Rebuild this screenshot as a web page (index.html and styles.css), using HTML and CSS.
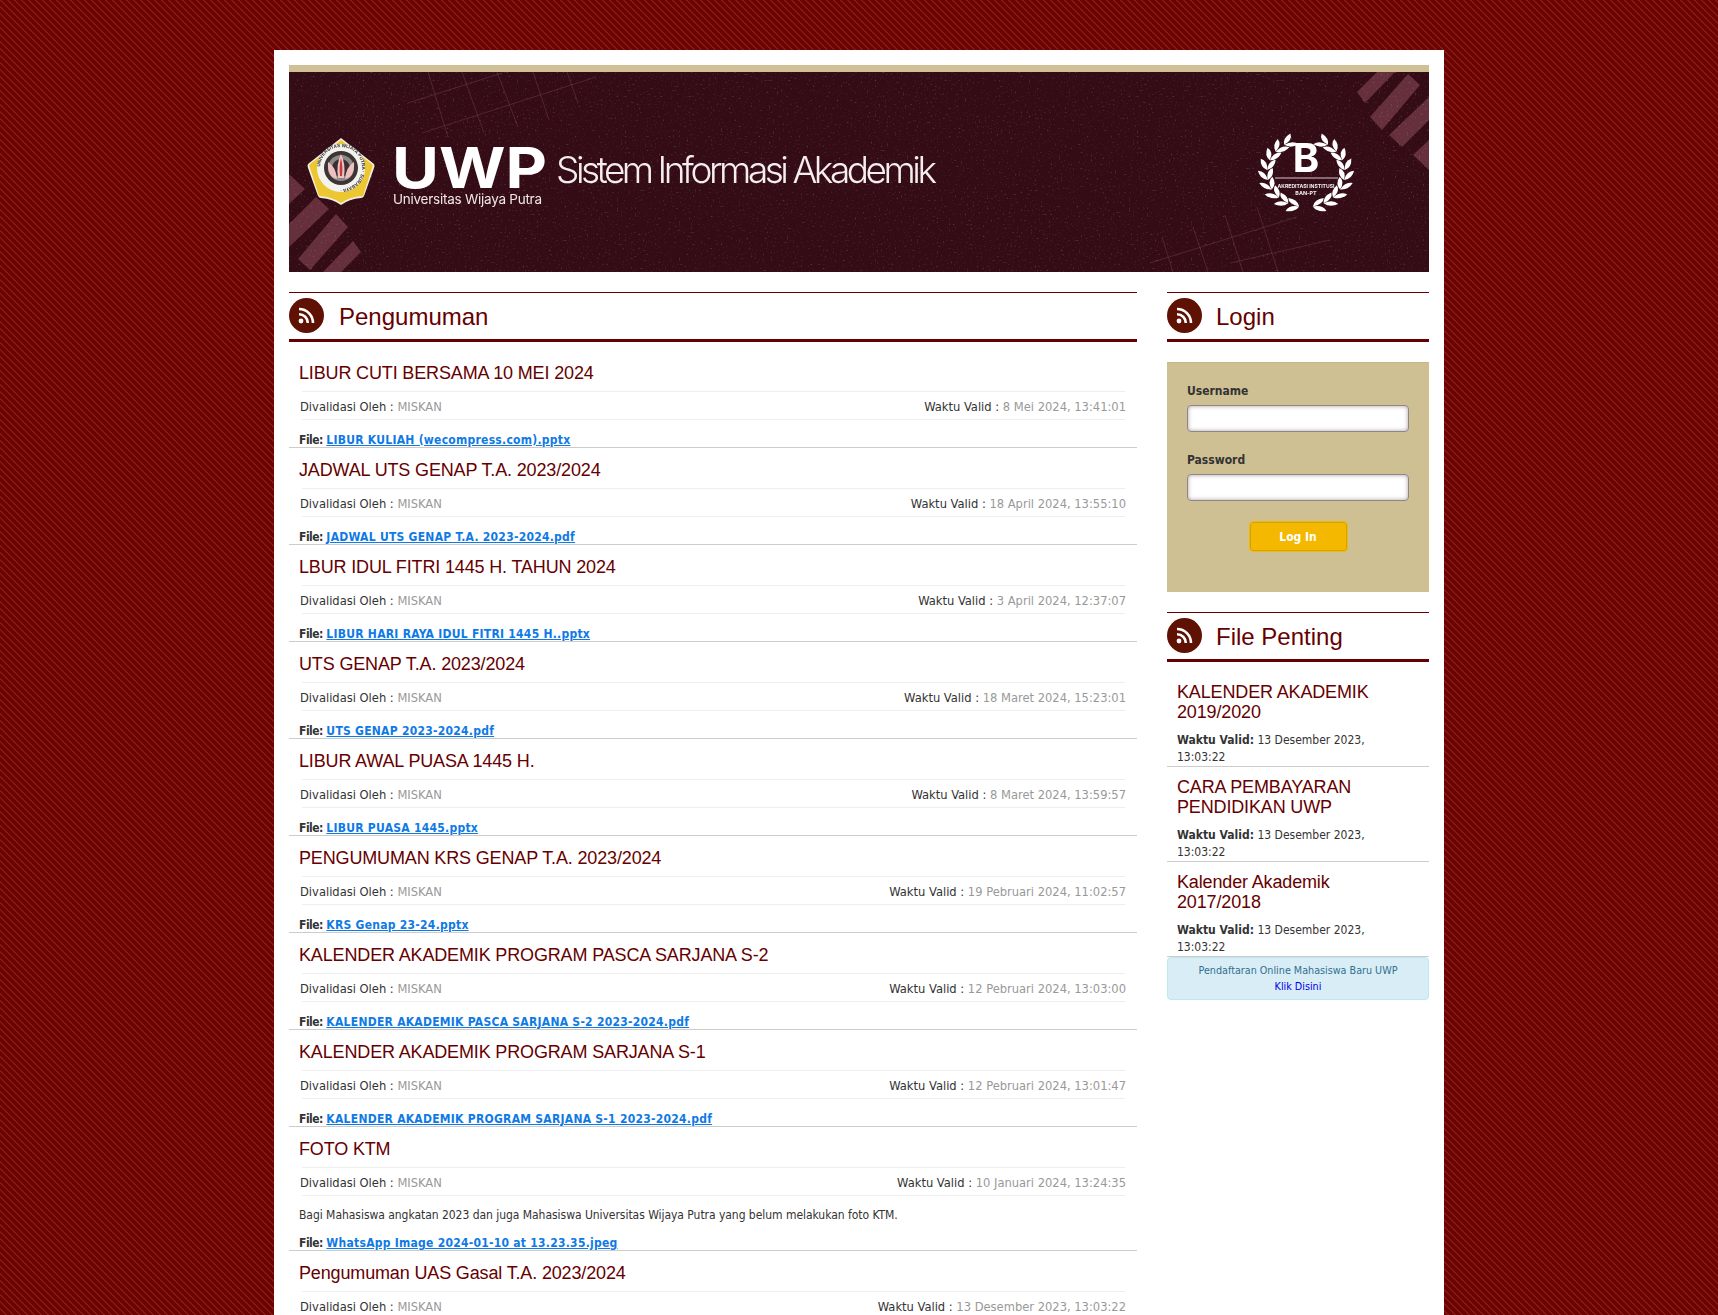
FILE: index.html
```html
<!DOCTYPE html>
<html lang="id">
<head>
<meta charset="utf-8">
<title>Sistem Informasi Akademik - UWP</title>
<link rel="stylesheet" href="styles.css">
</head>
<body>
<svg class="defs" width="0" height="0" aria-hidden="true">
  <defs>
    <symbol id="rss" viewBox="0 0 35 35">
      <circle cx="17.5" cy="17.5" r="17.5" fill="#5f1103"/>
      <circle cx="12" cy="23" r="2.4" fill="#fff"/>
      <path d="M10 16.2a8.8 8.8 0 0 1 8.8 8.8" fill="none" stroke="#fff" stroke-width="2.6"/>
      <path d="M10 11a14 14 0 0 1 14 14" fill="none" stroke="#fff" stroke-width="2.6"/>
    </symbol>
  </defs>
</svg>
<div class="page">
  <div class="banner-top"></div>
  <svg class="banner" viewBox="0 0 1140 200" width="1140" height="200" role="img" aria-label="UWP Sistem Informasi Akademik">
    <defs>
      <filter id="grain" x="0" y="0" width="100%" height="100%">
        <feTurbulence type="fractalNoise" baseFrequency="0.5" numOctaves="3" seed="7"/>
        <feColorMatrix type="matrix" values="0 0 0 0 1  0 0 0 0 0.8  0 0 0 0 0.8  0 0 0 4 -2.6"/>
      </filter>
      <filter id="soft" x="-5%" y="-5%" width="110%" height="110%"><feGaussianBlur stdDeviation="0.35"/></filter>
      <path id="arc" d="M31 96a21 21 0 1 1 42 0a21 21 0 1 1 -42 0"/>
      <g id="chev">
        <path d="M0 0Q3-7.5 12.5-7.5Q10.5 0 0 0Z"/>
        <path d="M0 0Q3 7.5 12.5 7.5Q10.5 0 0 0Z"/>
      </g>
      <g id="branch">
        <use href="#chev" transform="rotate(-170) translate(0 -39)"/>
        <use href="#chev" transform="rotate(-153) translate(0 -39)"/>
        <use href="#chev" transform="rotate(-136) translate(0 -39)"/>
        <use href="#chev" transform="rotate(-119) translate(0 -39)"/>
        <use href="#chev" transform="rotate(-102) translate(0 -39)"/>
        <use href="#chev" transform="rotate(-85) translate(0 -39)"/>
        <use href="#chev" transform="rotate(-68) translate(0 -39)"/>
        <use href="#chev" transform="rotate(-51) translate(0 -39)"/>
        <use href="#chev" transform="rotate(-34) translate(0 -39)"/>
      </g>
      <g id="stripes">
        <polygon points="1068,20 1076,31 1106,0 1088,0"/>
        <polygon points="1081,45 1093,58 1131,13 1119,2"/>
        <polygon points="1100,63 1113,75 1140,48 1140,25"/>
        <polygon points="1124,83 1140,98 1140,68"/>
      </g>
    </defs>
    <rect class="bn-bg" width="1140" height="200"/>
    <use href="#stripes" class="bn-stripe"/>
    <use href="#stripes" class="bn-stripe" transform="rotate(180 570 100)"/>
    <g class="bn-grid">
      <path d="M139 0L159 65M173 0L195 61M208 0L229 55M244 0L260 48M278 0L289 31M119 31L213 1M133 61L307 5"/>
      <path d="M861 191L1008 145M941 191L1041 168M873 165L884 200M904 155L919 200M936 143L954 200M968 135L989 200"/>
    </g>
    <rect class="bn-grain" width="1140" height="200" filter="url(#grain)"/>

    <g filter="url(#soft)">
      <path class="lg-edge" d="M52 66L85 92Q86 94 85 96L75 124Q74 126 72 126Q60 127 52 133Q44 127 32 126Q30 126 29 124L19 96Q18 94 19 92Z"/>
      <path class="lg-yellow" d="M52 68L84 93L74 124Q60 125 52 131Q44 125 30 124L20 93Z"/>
      <circle class="lg-ring" cx="52" cy="96" r="24"/>
      <circle class="lg-dark" cx="52" cy="96" r="17"/>
      <circle class="lg-gear" cx="52" cy="96" r="13"/>
      <circle class="lg-hub" cx="52" cy="96" r="9"/>
      <path class="lg-lotus" d="M52 82Q57 92 55 106L49 106Q47 92 52 82ZM39 90Q47 95 48 107Q38 105 39 90ZM65 90Q57 95 56 107Q66 105 65 90Z"/>
      <path class="lg-red" d="M52 86Q54 94 53 104L51 104Q50 94 52 86Z"/>
      <text class="lg-text"><textPath href="#arc" startOffset="1%">UNIVERSITAS WIJAYA PUTRA · SURABAYA ·</textPath></text>
    </g>

    <g filter="url(#soft)">
      <text class="bn-uwp" x="103" y="116" textLength="155" lengthAdjust="spacingAndGlyphs">UWP</text>
      <text class="bn-univ" x="104" y="132" textLength="149" lengthAdjust="spacing">Universitas Wijaya Putra</text>
      <text class="bn-sia" x="267" y="111" textLength="381" lengthAdjust="spacing">Sistem Informasi Akademik</text>
    </g>

    <g filter="url(#soft)" class="bn-white">
      <use href="#branch" transform="translate(1017 101) scale(1 .87)"/>
      <use href="#branch" transform="translate(1017 101) scale(-1 .87)"/>
      <text class="bn-b" x="1017" y="100" text-anchor="middle">B</text>
      <rect class="bn-rule" x="986" y="105.5" width="63" height="1"/>
      <text class="bn-akr" x="1017" y="116" text-anchor="middle" textLength="57" lengthAdjust="spacingAndGlyphs">AKREDITASI INSTITUSI</text>
      <text class="bn-akr" x="1017" y="123" text-anchor="middle">BAN-PT</text>
    </g>
  </svg>

  <div class="columns">
    <main class="col-main">
      <div class="sec-head"><svg class="sec-icon"><use href="#rss"/></svg><h3>Pengumuman</h3></div>
      <div class="news">
        <article class="item">
          <h4>LIBUR CUTI BERSAMA 10 MEI 2024</h4>
          <div class="meta"><span>Divalidasi Oleh : <em>MISKAN</em></span><span>Waktu Valid : <em>8 Mei 2024, 13:41:01</em></span></div>
          <p class="file"><b>File:</b> <a href="#">LIBUR KULIAH (wecompress.com).pptx</a></p>
        </article>
        <article class="item">
          <h4>JADWAL UTS GENAP T.A. 2023/2024</h4>
          <div class="meta"><span>Divalidasi Oleh : <em>MISKAN</em></span><span>Waktu Valid : <em>18 April 2024, 13:55:10</em></span></div>
          <p class="file"><b>File:</b> <a href="#">JADWAL UTS GENAP T.A. 2023-2024.pdf</a></p>
        </article>
        <article class="item">
          <h4>LBUR IDUL FITRI 1445 H. TAHUN 2024</h4>
          <div class="meta"><span>Divalidasi Oleh : <em>MISKAN</em></span><span>Waktu Valid : <em>3 April 2024, 12:37:07</em></span></div>
          <p class="file"><b>File:</b> <a href="#">LIBUR HARI RAYA IDUL FITRI 1445 H..pptx</a></p>
        </article>
        <article class="item">
          <h4>UTS GENAP T.A. 2023/2024</h4>
          <div class="meta"><span>Divalidasi Oleh : <em>MISKAN</em></span><span>Waktu Valid : <em>18 Maret 2024, 15:23:01</em></span></div>
          <p class="file"><b>File:</b> <a href="#">UTS GENAP 2023-2024.pdf</a></p>
        </article>
        <article class="item">
          <h4>LIBUR AWAL PUASA 1445 H.</h4>
          <div class="meta"><span>Divalidasi Oleh : <em>MISKAN</em></span><span>Waktu Valid : <em>8 Maret 2024, 13:59:57</em></span></div>
          <p class="file"><b>File:</b> <a href="#">LIBUR PUASA 1445.pptx</a></p>
        </article>
        <article class="item">
          <h4>PENGUMUMAN KRS GENAP T.A. 2023/2024</h4>
          <div class="meta"><span>Divalidasi Oleh : <em>MISKAN</em></span><span>Waktu Valid : <em>19 Pebruari 2024, 11:02:57</em></span></div>
          <p class="file"><b>File:</b> <a href="#">KRS Genap 23-24.pptx</a></p>
        </article>
        <article class="item">
          <h4>KALENDER AKADEMIK PROGRAM PASCA SARJANA S-2</h4>
          <div class="meta"><span>Divalidasi Oleh : <em>MISKAN</em></span><span>Waktu Valid : <em>12 Pebruari 2024, 13:03:00</em></span></div>
          <p class="file"><b>File:</b> <a href="#">KALENDER AKADEMIK PASCA SARJANA S-2 2023-2024.pdf</a></p>
        </article>
        <article class="item">
          <h4>KALENDER AKADEMIK PROGRAM SARJANA S-1</h4>
          <div class="meta"><span>Divalidasi Oleh : <em>MISKAN</em></span><span>Waktu Valid : <em>12 Pebruari 2024, 13:01:47</em></span></div>
          <p class="file"><b>File:</b> <a href="#">KALENDER AKADEMIK PROGRAM SARJANA S-1 2023-2024.pdf</a></p>
        </article>
        <article class="item">
          <h4>FOTO KTM</h4>
          <div class="meta"><span>Divalidasi Oleh : <em>MISKAN</em></span><span>Waktu Valid : <em>10 Januari 2024, 13:24:35</em></span></div>
          <p class="desc">Bagi Mahasiswa angkatan 2023 dan juga Mahasiswa Universitas Wijaya Putra yang belum melakukan foto KTM.</p>
          <p class="file"><b>File:</b> <a href="#">WhatsApp Image 2024-01-10 at 13.23.35.jpeg</a></p>
        </article>
        <article class="item">
          <h4>Pengumuman UAS Gasal T.A. 2023/2024</h4>
          <div class="meta"><span>Divalidasi Oleh : <em>MISKAN</em></span><span>Waktu Valid : <em>13 Desember 2023, 13:03:22</em></span></div>
        </article>
      </div>
    </main>

    <aside class="col-side">
      <div class="sec-head"><svg class="sec-icon"><use href="#rss"/></svg><h3>Login</h3></div>
      <form class="login">
        <label for="u">Username</label>
        <input id="u" type="text">
        <label for="p">Password</label>
        <input id="p" type="password">
        <button type="button">Log In</button>
      </form>

      <div class="sec-head sec-files"><svg class="sec-icon"><use href="#rss"/></svg><h3>File Penting</h3></div>
      <div class="files">
        <div class="f-item">
          <h4>KALENDER AKADEMIK 2019/2020</h4>
          <p><b>Waktu Valid:</b> 13 Desember 2023, 13:03:22</p>
        </div>
        <div class="f-item">
          <h4>CARA PEMBAYARAN PENDIDIKAN UWP</h4>
          <p><b>Waktu Valid:</b> 13 Desember 2023, 13:03:22</p>
        </div>
        <div class="f-item">
          <h4>Kalender Akademik 2017/2018</h4>
          <p><b>Waktu Valid:</b> 13 Desember 2023, 13:03:22</p>
        </div>
      </div>
      <div class="notice">
        <div>Pendaftaran Online Mahasiswa Baru UWP</div>
        <a href="#">Klik Disini</a>
      </div>
    </aside>
  </div>
</div>
</body>
</html>
```
FILE: styles.css
```css
html, body { margin: 0; height: 100vh; overflow: hidden; }
body {
  box-sizing: border-box;
  padding-top: 50px;
  background-color: #6e0202;
  background-image: linear-gradient(45deg, #801c14 0, #801c14 8%, #6e0202 8%, #6e0202 50%, #801c14 50%, #801c14 58%, #6e0202 58%, #6e0202 100%);
  background-size: 7px 7px;
  font-family: "DejaVu Sans Condensed", "DejaVu Sans", sans-serif;
  font-stretch: condensed;
  font-size: 12px;
  line-height: 17px;
  color: #333;
}
.defs { position: absolute; }
.page {
  box-sizing: border-box;
  width: 1170px;
  height: 100%;
  margin: 0 auto;
  padding: 15px;
  background: #fff;
}
.banner-top { height: 7px; background: #cfc096; }
.banner { display: block; }
.bn-bg { fill: #340c15; }
.bn-stripe { fill: #65303b; }
.bn-grid path { fill: none; stroke: #6e3a44; stroke-width: 0.8; opacity: .7; }
.bn-grain { opacity: .24; }
.bn-uwp { font: 700 57px Inter, sans-serif; fill: #fff; }
.bn-univ { font: 400 13.5px Inter, sans-serif; fill: #f1e6e6; }
.bn-sia { font: 300 37px Inter, sans-serif; fill: #f6eeee; }
.bn-white { fill: #fff; }
.bn-b { font: 700 40px Inter, sans-serif; fill: #fff; }
.bn-rule { fill: #d8c6c6; }
.bn-akr { font: 700 5.4px Inter, sans-serif; fill: #eee; }
.lg-edge { fill: #f3efe4; }
.lg-yellow { fill: #ecc733; }
.lg-ring { fill: #f4f2ee; }
.lg-dark { fill: #3b3436; }
.lg-gear { fill: #8d8a88; }
.lg-hub { fill: #3a2f32; }
.lg-lotus { fill: #efc0c0; }
.lg-red { fill: #c23a3a; }
.lg-text { font: 700 4.6px "Liberation Sans", sans-serif; fill: #2c2c2c; }

.columns { display: flex; gap: 30px; margin-top: 20px; align-items: flex-start; }
.col-main { width: 848px; }
.col-side { width: 262px; }

.sec-head {
  display: flex;
  align-items: center;
  gap: 15px;
  height: 46px;
  border-top: 1px solid #660000;
  border-bottom: 3px solid #660000;
}
.col-side .sec-head { gap: 14px; }
.sec-icon { width: 35px; height: 35px; flex: none; margin-top: -1px; }
.sec-head h3 {
  margin: 0;
  padding-top: 2px;
  font: 400 24px/26px "Liberation Sans", Arial, sans-serif;
  color: #660000;
}
.news { padding-top: 9px; }
.item { border-bottom: 1px solid #ccc; padding: 0 10px; }
.item h4, .f-item h4 {
  margin: 0;
  font: 400 18px/20px "Liberation Sans", Arial, sans-serif;
  letter-spacing: -0.15px;
  color: #660000;
}
.item h4 { padding: 12px 0 8px; }
.meta {
  display: flex;
  justify-content: space-between;
  box-sizing: border-box;
  height: 29px;
  padding-top: 1px;
  font-size: 12.8px;
  line-height: 27px;
  margin: 0 2px 0 3px;
  border-top: 1px solid #eee;
  border-bottom: 1px solid #eee;
}
.meta span:first-child { margin-left: -2px; }
.meta span:last-child { margin-right: -1px; }
.meta em { font-style: normal; color: #999; }
.file { box-sizing: border-box; height: 27px; margin: 0; padding-top: 12px; line-height: 17px; }
.file b { letter-spacing: -0.5px; }
.file a { font-weight: 700; letter-spacing: 0.26px; color: #0f7ae5; text-decoration: underline; }
.desc { margin: 0; padding-top: 11px; line-height: 16px; letter-spacing: -0.04px; }

.login {
  box-sizing: border-box;
  margin-top: 20px;
  height: 230px;
  padding: 20px 20px 0;
  background: #cfc094;
  border-top: 1px solid #c6b688;
  display: flex;
  flex-direction: column;
}
.login label { font-weight: 700; line-height: 17px; color: #333; margin-bottom: 5px; }
.login input {
  box-sizing: border-box;
  width: 222px;
  height: 27px;
  margin: 0 0 20px;
  padding: 0 6px;
  background: #fff;
  border: 1px solid #888;
  border-radius: 4px;
  box-shadow: inset 0 0 4px rgba(110, 70, 80, .55);
}
.login button {
  box-sizing: border-box;
  align-self: center;
  width: 97px;
  height: 29px;
  margin-top: 1px;
  background: #f5b800;
  border: 1px solid #c9a514;
  outline: 1px solid #f5b800;
  border-radius: 3px;
  color: #fff;
  font: 700 12px "DejaVu Sans Condensed", "DejaVu Sans", sans-serif;
}
.sec-files { margin-top: 20px; }
.files { padding-top: 21px; }
.f-item { border-bottom: 1px solid #ccc; padding: 0 10px; }
.f-item + .f-item { padding-top: 11px; }
.f-item h4 { line-height: 19.5px; padding-right: 20px; }
.f-item p { margin: 0; padding: 10px 20px 0 0; line-height: 17px; }
.notice {
  box-sizing: border-box;
  height: 43px;
  padding-top: 5px;
  background: #d9edf7;
  border: 1px solid #bce8f1;
  border-radius: 4px;
  color: #31708f;
  font-size: 10.7px;
  line-height: 16px;
  text-align: center;
}
.notice a { color: #0000ee; text-decoration: none; }
```
